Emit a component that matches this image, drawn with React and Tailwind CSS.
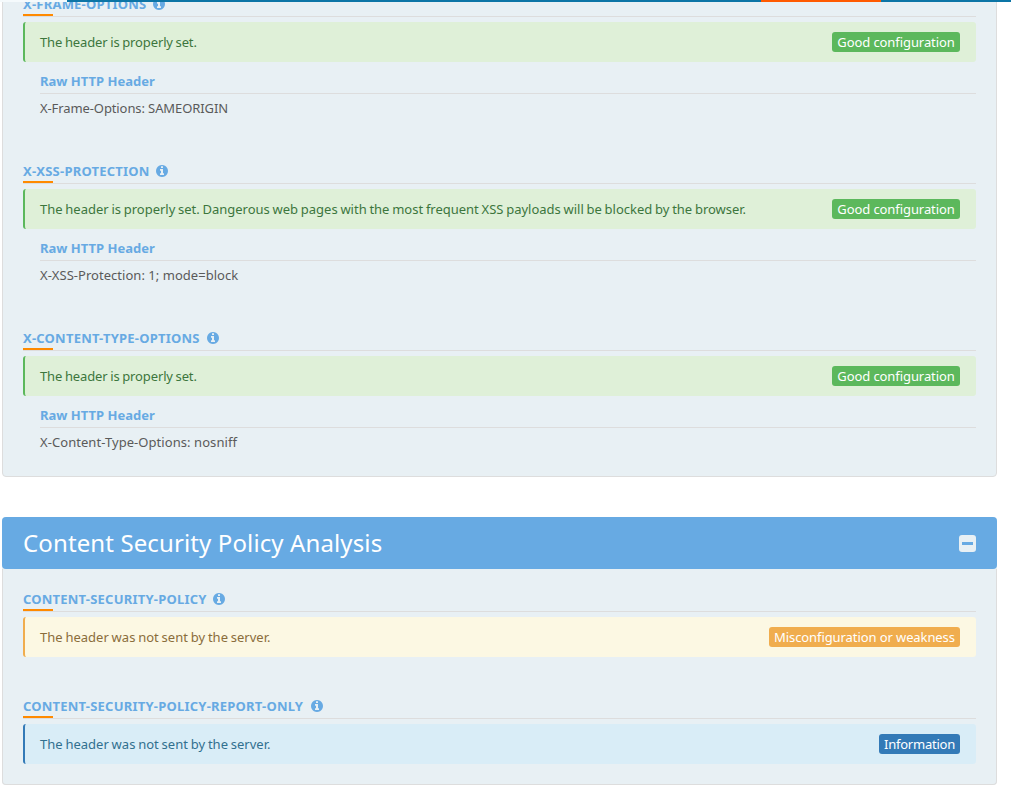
import React from "react";

const INFO_PATH =
  "M1152 1376v-160q0-14-9-23t-23-9h-96v-512q0-14-9-23t-23-9h-320q-14 0-23 9t-9 23v160q0 14 9 23t23 9h96v320h-96q-14 0-23 9t-9 23v160q0 14 9 23t23 9h448q14 0 23-9t9-23zm-128-896v-160q0-14-9-23t-23-9h-192q-14 0-23 9t-9 23v160q0 14 9 23t23 9h192q14 0 23-9t9-23zm640 416q0 209-103 385.5t-279.5 279.5-385.5 103-385.5-103-279.5-279.5-103-385.5 103-385.5 279.5-279.5 385.5-103 385.5 103 279.5 279.5 103 385.5z";

const tones = {
  good: { box: "border-[#5cb85c] bg-[#dff0d8] text-[#3c763d]", badge: "bg-[#5cb85c] w-32 tracking-[-0.08px]", label: "Good configuration" },
  warn: { box: "border-[#f0ad4e] bg-[#fcf8e3] text-[#8a6d3b]", badge: "bg-[#f0ad4e] w-[191px] tracking-[-0.09px]", label: "Misconfiguration or weakness" },
  info: { box: "border-[#337ab7] bg-[#d9edf7] text-[#31708f]", badge: "bg-[#337ab7] w-[81px] tracking-[-0.23px]", label: "Information" },
};

function Section({ title, width, tone, message, messageTracking, raw, rawTracking }) {
  const t = tones[tone];
  return (
    <section>
      <h3 className="flex h-6 items-center border-b border-[#dddddd] pb-px font-bold text-[#67aae3]">
        <span className={`tracking-[0.22px] whitespace-nowrap ${width}`}>{title}</span>
        <svg viewBox="0 0 1792 1792" className="ml-1.5 size-3.5 fill-current">
          <path d={INFO_PATH} />
        </svg>
      </h3>
      <div className="-mt-[3px] h-0.5 w-[30px] bg-[#ff8a00]" />
      <div className={`mt-1.5 flex h-10 items-center justify-between rounded-[3px] border-l-2 pr-4 pl-[15px] ${t.box}`}>
        <span className={`whitespace-nowrap [word-spacing:-0.6px] ${messageTracking}`}>{message}</span>
        <span className={`flex h-5 items-center justify-center rounded-[3px] whitespace-nowrap text-white ${t.badge}`}>
          {t.label}
        </span>
      </div>
      {raw && (
        <div className="mt-2 pl-[17px]">
          <h4 className="flex h-6 items-center border-b border-[#dddddd] pb-0.5 font-bold text-[#67aae3]">
            Raw HTTP Header
          </h4>
          <p className={`flex h-7 items-center text-[#5a5a5a] ${rawTracking}`}>{raw}</p>
        </div>
      )}
    </section>
  );
}

export default function App() {
  return (
    <div className="relative h-[791px] w-[1011px] overflow-hidden bg-white font-['Noto_Sans',sans-serif] text-[13px] leading-5">
      <div className="absolute top-0 left-0 z-10 flex h-0.5 w-full">
        <div className="w-[67px] bg-[#f5fafc]" />
        <div className="w-[694px] bg-[#0c75a6]" />
        <div className="w-[120px] bg-[#ff5a00]" />
        <div className="flex-1 bg-[#0c75a6]" />
      </div>
      <div className="-mt-5 mr-3.5 ml-0.5 flex flex-col gap-[38px] rounded-b-[4px] border border-[#dddddd] bg-[#e8f0f4] px-5 pt-3 pb-5">
        <Section
          title="X-FRAME-OPTIONS" width="w-[123px]" tone="good"
          message="The header is properly set." messageTracking="tracking-[-0.12px]"
          raw="X-Frame-Options: SAMEORIGIN" rawTracking="tracking-[-0.1px]"
        />
        <Section
          title="X-XSS-PROTECTION" width="w-[126px]" tone="good"
          message="The header is properly set. Dangerous web pages with the most frequent XSS payloads will be blocked by the browser."
          messageTracking="tracking-[-0.011px]"
          raw="X-XSS-Protection: 1; mode=block" rawTracking="tracking-[0.03px]"
        />
        <Section
          title="X-CONTENT-TYPE-OPTIONS" width="w-[177px]" tone="good"
          message="The header is properly set." messageTracking="tracking-[-0.12px]"
          raw="X-Content-Type-Options: nosniff" rawTracking="tracking-[0.06px]"
        />
      </div>
      <div className="mt-10 mr-3.5 ml-0.5 rounded-[4px] bg-[#e8f0f4]">
        <div className="flex h-[52px] items-center justify-between rounded-[4px] bg-[#67aae3] px-[21px] text-white">
          <h2 className="text-[24px] tracking-[0.12px]">Content Security Policy Analysis</h2>
          <div className="flex size-[17px] items-center justify-center rounded-[3px] bg-[#e8f0f4]">
            <div className="h-[3px] w-[11px] bg-[#67aae3]" />
          </div>
        </div>
        <div className="flex flex-col gap-[38px] rounded-b-[4px] border border-t-0 border-[#dddddd] px-5 pt-[19px] pb-5">
          <Section
            title="CONTENT-SECURITY-POLICY" width="w-[183px]" tone="warn"
            message="The header was not sent by the server." messageTracking="tracking-[0.01px]"
          />
          <Section
            title="CONTENT-SECURITY-POLICY-REPORT-ONLY" width="w-[281px]" tone="info"
            message="The header was not sent by the server." messageTracking="tracking-[0.01px]"
          />
        </div>
      </div>
    </div>
  );
}
